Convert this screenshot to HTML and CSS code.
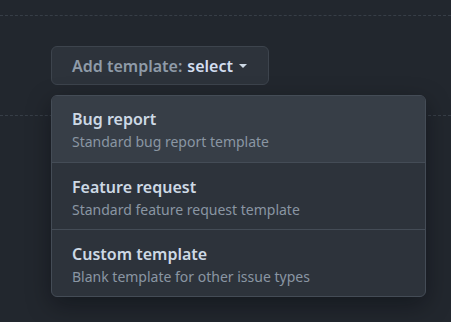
FILE: index.html
```html
<!DOCTYPE html>
<html lang="en">
<head>
    <meta charset="UTF-8">
    <meta name="viewport" content="width=device-width, initial-scale=1.0">
    <title>Add template</title>
    <link rel="stylesheet" href="styles.css">
</head>
<body>
    <div class="page">
        <hr class="rule rule-top">
        <div class="picker">
            <button class="picker-btn" type="button">
                <span class="picker-label">Add template:</span>
                <span class="picker-value">select</span>
                <span class="caret"></span>
            </button>
            <hr class="rule rule-mid">
            <ul class="menu">
                <li class="menu-item active">
                    <div class="item-title">Bug report</div>
                    <div class="item-desc">Standard bug report template</div>
                </li>
                <li class="menu-item">
                    <div class="item-title">Feature request</div>
                    <div class="item-desc">Standard feature request template</div>
                </li>
                <li class="menu-item">
                    <div class="item-title">Custom template</div>
                    <div class="item-desc">Blank template for other issue types</div>
                </li>
            </ul>
        </div>
    </div>
</body>
</html>
```

FILE: styles.css
```css
html, body {
    margin: 0;
    padding: 0;
    background-color: #22272e;
    height: 100%;
}
body {
    font-family: "Noto Sans", "Open Sans", sans-serif;
    color: #cdd9e5;
}
.page {
    padding-top: 15px;
}
.rule {
    border: none;
    border-top: 1px dashed #373e47;
    margin: 0;
}
.picker {
    position: relative;
    padding: 30px 0 0 51px;
}
.picker-btn {
    display: flex;
    align-items: center;
    height: 39px;
    padding: 0 21px 0 20px;
    background-color: #2d333b;
    border: 1px solid #3d444d;
    border-radius: 6px;
    font-family: inherit;
    font-size: 16px;
    font-weight: 600;
    cursor: pointer;
}
.picker-label {
    color: #8f9ba8;
    margin-right: 5px;
}
.picker-value {
    color: #d3def0;
}
.caret {
    width: 0;
    height: 0;
    margin-left: 6px;
    margin-top: 1px;
    border-left: 4.5px solid transparent;
    border-right: 4.5px solid transparent;
    border-top: 4.5px solid #cdd9e5;
}
.rule-mid {
    position: absolute;
    left: 0;
    right: 0;
    top: 99px;
}
.menu {
    position: relative;
    list-style: none;
    margin: 10px 0 0 0;
    padding: 0;
    width: 373px;
    background-color: #2d333b;
    border: 1px solid #444c56;
    border-radius: 6px;
    box-shadow: 0 8px 24px rgba(1, 4, 9, 0.4);
    overflow: hidden;
}
.menu-item {
    height: 67px;
    box-sizing: border-box;
    padding: 11px 20px 0;
    border-top: 1px solid #444c56;
}
.menu-item:first-child {
    border-top: none;
    height: 66px;
    padding-top: 10px;
}
.menu-item.active {
    background-color: #373e47;
}
.item-title {
    font-size: 16px;
    font-weight: 600;
    line-height: 26px;
    color: #cdd9e5;
}
.item-desc {
    font-size: 14px;
    line-height: 20px;
    color: #8a96a3;
}
```
